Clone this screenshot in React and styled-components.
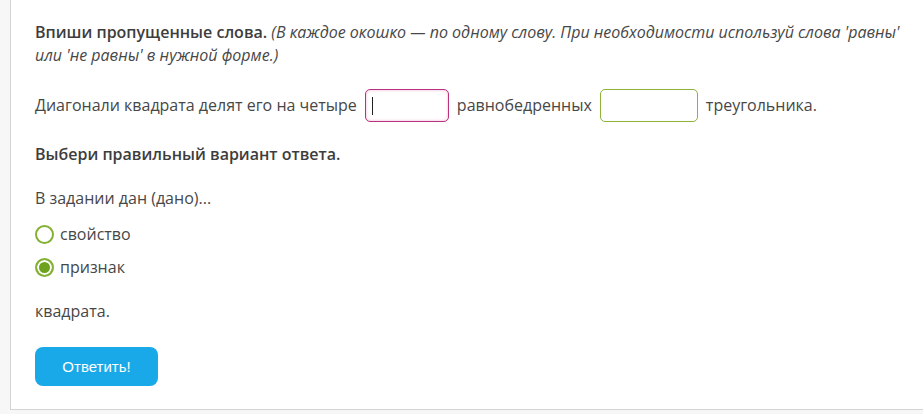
import React from 'react'
import styled, { createGlobalStyle } from 'styled-components'

const GlobalStyle = createGlobalStyle`
body{
    margin:0;
    background:#f7f7f7;
    font-family:"Open Sans", "Noto Sans", sans-serif;
}
`

function App () {
    return (
        <>
            <GlobalStyle />
            <Page>
                <Panel>
                    <Title>
                        <b>Впиши пропущенные слова.</b> <i>(В каждое окошко — по одному слову. При необходимости используй слова 'равны' или 'не равны' в нужной форме.)</i>
                    </Title>
                    <Sentence>
                        Диагонали квадрата делят его на четыре
                        <Blank tone="pink" width={84} active />
                        равнобедренных
                        <Blank tone="green" width={98} />
                        треугольника.
                    </Sentence>
                    <Question>Выбери правильный вариант ответа.</Question>
                    <Line>В задании дан (дано)...</Line>
                    <Options>
                        <Option>
                            <Radio />
                            свойство
                        </Option>
                        <Option>
                            <Radio checked />
                            признак
                        </Option>
                    </Options>
                    <Line>квадрата.</Line>
                    <Button>Ответить!</Button>
                </Panel>
            </Page>
        </>
    )
}

const Page = styled.div`
padding-left:10px;
`
const Panel = styled.div`
background:#fff;
border-left:1px solid #d4d4d4;
border-bottom:1px solid #d4d4d4;
padding:21px 12px 23px 24px;
display:flex;
flex-direction:column;
align-items:flex-start;
color:#474747;
font-size:16px;
line-height:23px;
`
const Title = styled.div`
b{
    font-weight:600;
    color:#3d3d3d;
}
i{
    font-style:italic;
}
`
const Sentence = styled.div`
margin-top:22px;
display:flex;
align-items:center;
gap:8px;
`
const Blank = styled.span`
position:relative;
display:inline-block;
width:${p => p.width}px;
height:33px;
box-sizing:border-box;
border-radius:5px;
background:#fff;
border:1px solid ${p => p.tone === 'pink' ? '#b8327e' : '#8db33a'};
box-shadow:${p => p.tone === 'pink' ? 'inset 0 0 3px rgba(220,80,160,0.45)' : 'none'};
&::before{
    content:'';
    display:${p => p.active ? 'block' : 'none'};
    position:absolute;
    left:6px;
    top:7px;
    width:1px;
    height:18px;
    background:#222;
}
`
const Question = styled.div`
margin-top:21px;
font-weight:600;
color:#3d3d3d;
`
const Line = styled.div`
margin-top:21px;
`
const Options = styled.div`
margin-top:13px;
display:flex;
flex-direction:column;
gap:10px;
`
const Option = styled.label`
display:flex;
align-items:center;
gap:6px;
height:23px;
`
const Radio = styled.span`
width:19px;
height:19px;
box-sizing:border-box;
border-radius:50%;
border:2px solid #84b135;
background:${p => p.checked ? '#6fa21c' : '#fff'};
box-shadow:${p => p.checked ? 'inset 0 0 0 2px #fff' : 'none'};
`
const Button = styled.button`
margin-top:24px;
width:123px;
height:39px;
border:none;
border-radius:8px;
background:#1aa9e8;
color:#fff;
font-family:"Liberation Sans", Arial, sans-serif;
font-size:15px;
cursor:pointer;
`

export default App
